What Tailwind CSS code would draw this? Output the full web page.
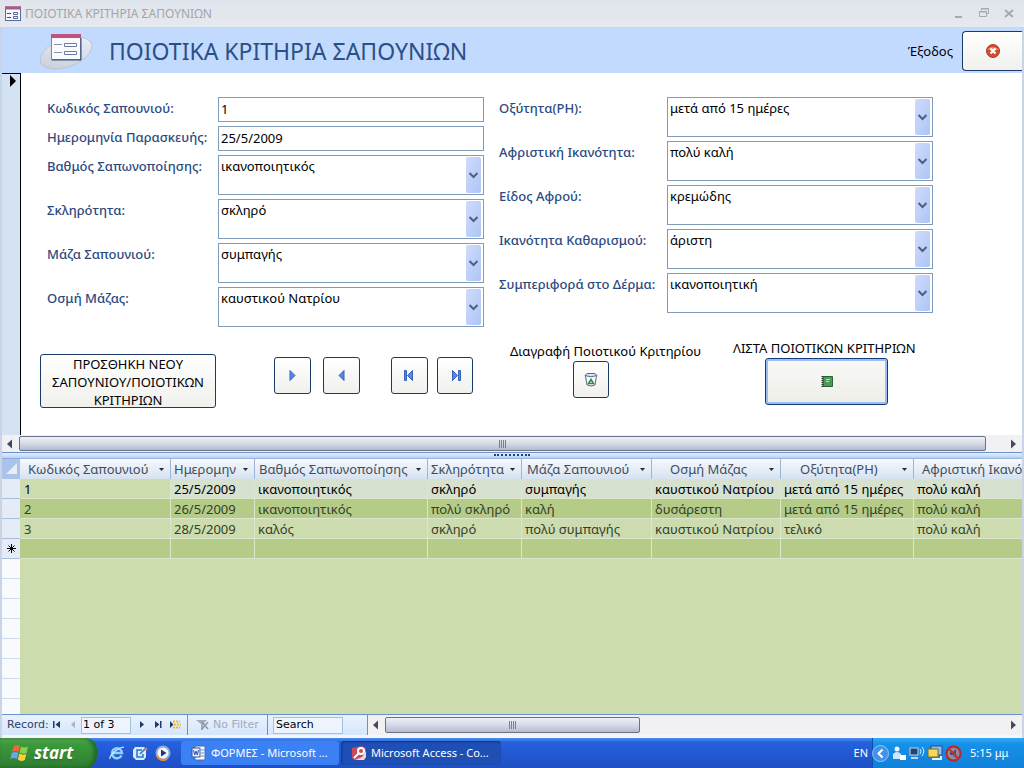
<!doctype html>
<html lang="el">

<head>
  <meta charset="UTF-8" />
  <meta name="viewport" content="width=device-width, initial-scale=1.0" />
  <title>Ποιοτικά Κριτήρια Σαπουνιών</title>
  <script src="https://cdn.jsdelivr.net/npm/@tailwindcss/browser@4"></script>
</head>

<body class="min-h-screen flex flex-col overflow-x-hidden bg-[#c9d5e6] font-['Noto_Sans',sans-serif] text-[13px] leading-[18px] text-black">

  <!-- Title bar -->
  <div class="flex items-center h-7 pl-[5px] pr-2 bg-linear-to-b from-[#dfe4ec] to-[#e6e9ee] border-b border-[#cbd6e6]">
    <svg class="w-4 h-4 shrink-0" viewBox="0 0 16 16" fill="none">
      <rect x=".5" y="1" width="15" height="13.5" fill="#f8faff" stroke="#5a6da0" />
      <path d="M0 2h16" stroke="#b0577c" stroke-width="3" />
      <path d="M2 7.500h4M2 11.500h4" stroke="#444c66" />
      <path d="M8.500 6.500h4v2h-4zM8.500 10.500h4v2h-4z" fill="#fff" stroke="#52658f" />
    </svg>
    <h2 class="ml-1 text-[12px] text-[#a3a5ab]">ΠΟΙΟΤΙΚΑ ΚΡΙΤΗΡΙΑ ΣΑΠΟΥΝΙΩΝ</h2>
    <div class="ml-auto flex gap-[13px]">
      <button type="button" aria-label="Minimize"><svg class="w-3 h-3" viewBox="0 0 12 12"><path d="M1 9h7" stroke="#a5abb5" stroke-width="2" /></svg></button>
      <button type="button" aria-label="Restore"><svg class="w-3 h-3" viewBox="0 0 12 12" fill="none" stroke="#a5abb5"><path d="M2.500 2.500v-2h7v5h-2M2 1h8" /><path d="M.5 3.500h7v5h-7zM0 4h8" /></svg></button>
      <button type="button" aria-label="Close"><svg class="w-3 h-3" viewBox="0 0 12 12" fill="none" stroke="#a5abb5" stroke-width="2"><path d="M1 2l8 7M9 2l-8 7" /></svg></button>
    </div>
  </div>

  <div class="flex flex-col flex-1 mx-[2px] min-w-0">

    <!-- Form header -->
    <header class="flex items-center h-[45px] pl-9 bg-[#c1dafe]">
      <svg class="w-14 h-10 shrink-0" viewBox="0 0 56 40">
        <defs>
          <linearGradient id="oval" x1="0" y1="1" x2="1" y2="0">
            <stop offset="0" stop-color="#c5cad3" />
            <stop offset="1" stop-color="#edf3fc" />
          </linearGradient>
        </defs>
        <ellipse cx="28" cy="22" rx="27" ry="14" transform="rotate(-20 28 22)" fill="url(#oval)" stroke="#b3bccb" stroke-width=".7" />
        <rect x="13.500" y="4.500" width="29" height="24" fill="#f8fafd" stroke="#7987a6" />
        <path d="M13 5h30" stroke="#c0527c" stroke-width="4" />
        <path d="M16 13.500h8M16 21.500h8" stroke="#8793a8" />
        <path d="M26.500 12.500h12v3h-12zM26.500 20.500h12v3h-12z" fill="#fff" stroke="#687d9f" />
        <path d="M43 7v22H14" fill="none" stroke="#34466e" />
      </svg>
      <h1 class="ml-[15px] text-[23px] leading-8 text-[#2b4f86]">ΠΟΙΟΤΙΚΑ ΚΡΙΤΗΡΙΑ ΣΑΠΟΥΝΙΩΝ</h1>
      <label for="exit" class="ml-auto mr-[9px]">Έξοδος</label>
      <button id="exit" type="button" class="flex items-center justify-center w-[60px] h-10 rounded-l-sm border border-r-0 border-[#1b3a67] bg-linear-to-b from-white to-[#f0f0ec]">
        <svg class="w-4 h-4" viewBox="0 0 16 16">
          <circle cx="8" cy="8" r="6.500" fill="#d9482b" stroke="#a8402c" />
          <path d="M2.500 7a6 5 0 0 1 11 0z" fill="#ee8668" />
          <path d="M5.500 5.500l5 5M10.500 5.500l-5 5" stroke="#fff" stroke-width="2.400" />
        </svg>
      </button>
    </header>

    <!-- Form detail -->
    <div class="flex h-[362px] bg-white">
      <div class="w-[19px] shrink-0 border-t border-r border-black bg-[#d4e3f3]">
        <svg class="w-[18px] h-4" viewBox="0 0 18 16"><path d="M8 1v12l6-6z" fill="#000" /></svg>
      </div>

      <div class="flex-1 min-w-0">
        <form class="flex items-start pt-6 pl-[26px] gap-[15px] text-[#2b4a80]">
          <div class="grid grid-cols-[171px_266px] gap-y-1 items-start">
            <label for="code" class="pt-[2px] font-medium whitespace-nowrap">Κωδικός Σαπουνιού:</label>
            <input id="code" value="1" class="h-[25px] px-[2px] pb-[2px] border border-[#7f9db9] text-black" />

            <label for="date" class="pt-[2px] font-medium whitespace-nowrap">Ημερομηνία Παρασκευής:</label>
            <input id="date" value="25/5/2009" class="h-[25px] px-[2px] pb-[2px] border border-[#7f9db9] text-black" />

            <label for="grade" class="pt-[2px] font-medium whitespace-nowrap">Βαθμός Σαπωνοποίησης:</label>
            <div class="relative">
              <select id="grade" class="block appearance-none w-full h-10 px-[2px] pb-[18px] border border-[#7f9db9] bg-white text-black"><option>ικανοποιητικός</option></select>
              <span class="absolute right-[3px] top-[2px] bottom-[2px] flex items-center pointer-events-none w-[15px] rounded-xs bg-linear-to-br from-[#cfdcfb] to-[#afc5f7]"><svg class="w-[15px] h-3" viewBox="0 0 15 12" fill="none"><path d="M3.500 4l4 4 4-4" stroke="#4d6185" stroke-width="2" /></svg></span>
            </div>

            <label for="hardness" class="pt-[2px] font-medium whitespace-nowrap">Σκληρότητα:</label>
            <div class="relative">
              <select id="hardness" class="block appearance-none w-full h-10 px-[2px] pb-[18px] border border-[#7f9db9] bg-white text-black"><option>σκληρό</option></select>
              <span class="absolute right-[3px] top-[2px] bottom-[2px] flex items-center pointer-events-none w-[15px] rounded-xs bg-linear-to-br from-[#cfdcfb] to-[#afc5f7]"><svg class="w-[15px] h-3" viewBox="0 0 15 12" fill="none"><path d="M3.500 4l4 4 4-4" stroke="#4d6185" stroke-width="2" /></svg></span>
            </div>

            <label for="mass" class="pt-[2px] font-medium whitespace-nowrap">Μάζα Σαπουνιού:</label>
            <div class="relative">
              <select id="mass" class="block appearance-none w-full h-10 px-[2px] pb-[18px] border border-[#7f9db9] bg-white text-black"><option>συμπαγής</option></select>
              <span class="absolute right-[3px] top-[2px] bottom-[2px] flex items-center pointer-events-none w-[15px] rounded-xs bg-linear-to-br from-[#cfdcfb] to-[#afc5f7]"><svg class="w-[15px] h-3" viewBox="0 0 15 12" fill="none"><path d="M3.500 4l4 4 4-4" stroke="#4d6185" stroke-width="2" /></svg></span>
            </div>

            <label for="smell" class="pt-[2px] font-medium whitespace-nowrap">Οσμή Μάζας:</label>
            <div class="relative">
              <select id="smell" class="block appearance-none w-full h-10 px-[2px] pb-[18px] border border-[#7f9db9] bg-white text-black"><option>καυστικού Νατρίου</option></select>
              <span class="absolute right-[3px] top-[2px] bottom-[2px] flex items-center pointer-events-none w-[15px] rounded-xs bg-linear-to-br from-[#cfdcfb] to-[#afc5f7]"><svg class="w-[15px] h-3" viewBox="0 0 15 12" fill="none"><path d="M3.500 4l4 4 4-4" stroke="#4d6185" stroke-width="2" /></svg></span>
            </div>
          </div>

          <div class="grid grid-cols-[168px_266px] gap-y-1 items-start">
            <label for="ph" class="pt-[2px] font-medium whitespace-nowrap">Οξύτητα(PH):</label>
            <div class="relative">
              <select id="ph" class="block appearance-none w-full h-10 px-[2px] pb-[18px] border border-[#7f9db9] bg-white text-black"><option>μετά από 15 ημέρες</option></select>
              <span class="absolute right-[3px] top-[2px] bottom-[2px] flex items-center pointer-events-none w-[15px] rounded-xs bg-linear-to-br from-[#cfdcfb] to-[#afc5f7]"><svg class="w-[15px] h-3" viewBox="0 0 15 12" fill="none"><path d="M3.500 4l4 4 4-4" stroke="#4d6185" stroke-width="2" /></svg></span>
            </div>

            <label for="foaming" class="pt-[2px] font-medium whitespace-nowrap">Αφριστική Ικανότητα:</label>
            <div class="relative">
              <select id="foaming" class="block appearance-none w-full h-10 px-[2px] pb-[18px] border border-[#7f9db9] bg-white text-black"><option>πολύ καλή</option></select>
              <span class="absolute right-[3px] top-[2px] bottom-[2px] flex items-center pointer-events-none w-[15px] rounded-xs bg-linear-to-br from-[#cfdcfb] to-[#afc5f7]"><svg class="w-[15px] h-3" viewBox="0 0 15 12" fill="none"><path d="M3.500 4l4 4 4-4" stroke="#4d6185" stroke-width="2" /></svg></span>
            </div>

            <label for="foam" class="pt-[2px] font-medium whitespace-nowrap">Είδος Αφρού:</label>
            <div class="relative">
              <select id="foam" class="block appearance-none w-full h-10 px-[2px] pb-[18px] border border-[#7f9db9] bg-white text-black"><option>κρεμώδης</option></select>
              <span class="absolute right-[3px] top-[2px] bottom-[2px] flex items-center pointer-events-none w-[15px] rounded-xs bg-linear-to-br from-[#cfdcfb] to-[#afc5f7]"><svg class="w-[15px] h-3" viewBox="0 0 15 12" fill="none"><path d="M3.500 4l4 4 4-4" stroke="#4d6185" stroke-width="2" /></svg></span>
            </div>

            <label for="cleaning" class="pt-[2px] font-medium whitespace-nowrap">Ικανότητα Καθαρισμού:</label>
            <div class="relative">
              <select id="cleaning" class="block appearance-none w-full h-10 px-[2px] pb-[18px] border border-[#7f9db9] bg-white text-black"><option>άριστη</option></select>
              <span class="absolute right-[3px] top-[2px] bottom-[2px] flex items-center pointer-events-none w-[15px] rounded-xs bg-linear-to-br from-[#cfdcfb] to-[#afc5f7]"><svg class="w-[15px] h-3" viewBox="0 0 15 12" fill="none"><path d="M3.500 4l4 4 4-4" stroke="#4d6185" stroke-width="2" /></svg></span>
            </div>

            <label for="skin" class="pt-[2px] font-medium whitespace-nowrap">Συμπεριφορά στο Δέρμα:</label>
            <div class="relative">
              <select id="skin" class="block appearance-none w-full h-10 px-[2px] pb-[18px] border border-[#7f9db9] bg-white text-black"><option>ικανοποιητική</option></select>
              <span class="absolute right-[3px] top-[2px] bottom-[2px] flex items-center pointer-events-none w-[15px] rounded-xs bg-linear-to-br from-[#cfdcfb] to-[#afc5f7]"><svg class="w-[15px] h-3" viewBox="0 0 15 12" fill="none"><path d="M3.500 4l4 4 4-4" stroke="#4d6185" stroke-width="2" /></svg></span>
            </div>
          </div>
        </form>

        <!-- Form actions -->
        <div class="flex items-start mt-3 pl-[19px]">
          <button type="button" class="mt-[15px] w-44 h-[54px] overflow-hidden rounded-[3px] border border-[#1b3a67] bg-linear-to-b from-white to-[#f0f0ec]">ΠΡΟΣΘΗΚΗ ΝΕΟΥ ΣΑΠΟΥΝΙΟΥ/ΠΟΙΟΤΙΚΩΝ ΚΡΙΤΗΡΙΩΝ</button>

          <div class="flex mt-[18px] ml-[58px] gap-3">
            <button type="button" aria-label="Επόμενη" class="flex items-center justify-center w-[37px] h-[37px] rounded-[3px] border border-[#1b3a67] bg-linear-to-b from-white to-[#f0f0ec]">
              <svg class="w-4 h-4" viewBox="0 0 16 16"><path d="M5 2.500v10l5-5z" fill="#5b86e5" stroke="#3560bd" /></svg>
            </button>
            <button type="button" aria-label="Προηγούμενη" class="flex items-center justify-center w-[37px] h-[37px] rounded-[3px] border border-[#1b3a67] bg-linear-to-b from-white to-[#f0f0ec]">
              <svg class="w-4 h-4" viewBox="0 0 16 16"><path d="M10 2.500v10l-5-5z" fill="#5b86e5" stroke="#3560bd" /></svg>
            </button>
          </div>
          <div class="flex mt-[18px] ml-[31px] gap-[9px]">
            <button type="button" aria-label="Πρώτη" class="flex items-center justify-center w-[37px] h-[37px] rounded-[3px] border border-[#1b3a67] bg-linear-to-b from-white to-[#f0f0ec]">
              <svg class="w-4 h-4" viewBox="0 0 16 16" fill="#5b86e5" stroke="#3560bd"><path d="M2.500 2.500h2v10h-2zM10.500 2.500v10l-5-5z" /></svg>
            </button>
            <button type="button" aria-label="Τελευταία" class="flex items-center justify-center w-9 h-[37px] rounded-[3px] border border-[#1b3a67] bg-linear-to-b from-white to-[#f0f0ec]">
              <svg class="w-4 h-4" viewBox="0 0 16 16" fill="#5b86e5" stroke="#3560bd"><path d="M11.500 2.500h2v10h-2zM5.500 2.500v10l5-5z" /></svg>
            </button>
          </div>

          <div class="mt-[3px] ml-[37px] w-[193px]">
            <label for="delete" class="block pb-px whitespace-nowrap">Διαγραφή Ποιοτικού Κριτηρίου</label>
            <button id="delete" type="button" class="flex items-center justify-center ml-[63px] w-9 h-[37px] rounded-[3px] border border-[#1b3a67] bg-linear-to-b from-white to-[#f0f0ec]">
              <svg class="w-4 h-4" viewBox="0 0 16 16" fill="none">
                <path d="M2.500 4l1.500 9q4 2 8 0L13.500 4" fill="#f5f7fa" stroke="#5a6a85" />
                <path d="M2 3.500l2-2h8l2 2q-6 2.500-12 0z" fill="#dfe5ee" stroke="#5a6a85" />
                <path d="M8 7.500l2.500 4h-5z" stroke="#2f8a45" stroke-width="1.500" />
              </svg>
            </button>
          </div>

          <div class="ml-[30px]">
            <label for="list" class="block pb-px whitespace-nowrap">ΛΙΣΤΑ ΠΟΙΟΤΙΚΩΝ ΚΡΙΤΗΡΙΩΝ</label>
            <button id="list" type="button" class="flex items-center justify-center ml-8 w-[123px] h-[47px] rounded-[3px] border border-[#123a7c] bg-linear-to-b from-[#f8f8f5] to-[#eeeee9] inset-ring-2 inset-ring-[#9fbdf0]">
              <svg class="w-3 h-3" viewBox="0 0 12 12">
                <path d="M2 .5h9.500v10H2z" fill="#4c9a56" stroke="#2c6236" />
                <path d="M5 3.500h4M5 5.500h3" stroke="#b9e2b6" />
                <path d="M1.500 0v11" stroke="#333" stroke-width="2" stroke-dasharray="1 1" />
              </svg>
            </button>
          </div>
        </div>
      </div>
    </div>

    <!-- Form scrollbar -->
    <div class="flex items-stretch h-[17px] bg-[#f1f1f3]">
      <button type="button" aria-label="Αριστερά" class="w-[17px] shrink-0"><svg class="w-4 h-4" viewBox="0 0 16 16"><path d="M10 3.500v9L5 8z" fill="#3e4a60" /></svg></button>
      <div class="flex-1 flex items-center justify-center my-px rounded-xs border border-[#6a7287] bg-linear-to-b from-[#eef1f7] via-[#d5dae6] to-[#b4bbcc]">
        <svg class="w-2 h-2" viewBox="0 0 8 8"><path d="M.5 0v8M2.500 0v8M4.500 0v8M6.500 0v8" stroke="#767f92" /></svg>
      </div>
      <button type="button" aria-label="Δεξιά" class="w-9 shrink-0 flex items-center justify-end pr-px"><svg class="w-4 h-4" viewBox="0 0 16 16"><path d="M6 3.500v9L11 8z" fill="#3e4a60" /></svg></button>
    </div>

    <!-- Splitter -->
    <div class="flex items-start justify-center h-[6px] pt-px border-t border-[#6b92cd] bg-linear-to-b from-[#e6f0ff] to-[#b4d0fa]">
      <span class="w-9 border-t-2 border-dotted border-[#263f72]"></span>
    </div>

    <!-- Datasheet -->
    <div class="flex flex-col flex-1 overflow-hidden bg-[#cddcaf]">
      <table class="table-fixed w-full border-separate border-spacing-0 text-left whitespace-nowrap">
        <colgroup>
          <col class="w-[18px]" />
          <col class="w-[151px]" />
          <col class="w-[84px]" />
          <col class="w-[173px]" />
          <col class="w-[94px]" />
          <col class="w-[130px]" />
          <col class="w-[129px]" />
          <col class="w-[133px]" />
          <col />
        </colgroup>
        <thead>
          <tr class="h-[21px] bg-linear-to-b from-[#f7fafe] to-[#d7e2f0] text-[#414d5c]">
            <th scope="col" aria-label="Επιλογή" class="p-0 bg-[#a9c3e9] border-t border-[#8dabda]"><svg class="w-[18px] h-5" viewBox="0 0 18 20"><path d="M15 4v11H4z" fill="#e7eef8" /></svg></th>
            <th scope="col" class="p-0 font-normal border-t border-r border-[#9db5d6]"><div class="flex items-center justify-between pl-2 pr-[6px]">Κωδικός Σαπουνιού<svg class="w-[5px] h-[3px]" viewBox="0 0 5 3"><path d="M0 0h5L2.500 3z" fill="#222b3a" /></svg></div></th>
            <th scope="col" class="p-0 font-normal border-t border-r border-[#9db5d6]"><div class="flex items-center justify-between pl-[3px] pr-[6px]">Ημερομην<svg class="w-[5px] h-[3px]" viewBox="0 0 5 3"><path d="M0 0h5L2.500 3z" fill="#222b3a" /></svg></div></th>
            <th scope="col" class="p-0 font-normal border-t border-r border-[#9db5d6]"><div class="flex items-center justify-between pl-1 pr-[6px]">Βαθμός Σαπωνοποίησης<svg class="w-[5px] h-[3px]" viewBox="0 0 5 3"><path d="M0 0h5L2.500 3z" fill="#222b3a" /></svg></div></th>
            <th scope="col" class="p-0 font-normal border-t border-r border-[#9db5d6]"><div class="flex items-center justify-between pl-[3px] pr-[6px]">Σκληρότητα<svg class="w-[5px] h-[3px]" viewBox="0 0 5 3"><path d="M0 0h5L2.500 3z" fill="#222b3a" /></svg></div></th>
            <th scope="col" class="p-0 font-normal border-t border-r border-[#9db5d6]"><div class="flex items-center justify-between pl-[5px] pr-[6px]">Μάζα Σαπουνιού<svg class="w-[5px] h-[3px]" viewBox="0 0 5 3"><path d="M0 0h5L2.500 3z" fill="#222b3a" /></svg></div></th>
            <th scope="col" class="p-0 font-normal border-t border-r border-[#9db5d6]"><div class="flex items-center justify-between pl-[18px] pr-[6px]">Οσμή Μάζας<svg class="w-[5px] h-[3px]" viewBox="0 0 5 3"><path d="M0 0h5L2.500 3z" fill="#222b3a" /></svg></div></th>
            <th scope="col" class="p-0 font-normal border-t border-r border-[#9db5d6]"><div class="flex items-center justify-between pl-[19px] pr-[6px]">Οξύτητα(PH)<svg class="w-[5px] h-[3px]" viewBox="0 0 5 3"><path d="M0 0h5L2.500 3z" fill="#222b3a" /></svg></div></th>
            <th scope="col" class="p-0 pl-2 font-normal overflow-hidden border-t border-[#9db5d6]">Αφριστική Ικανότητα</th>
          </tr>
        </thead>
        <tbody class="text-[#33402a]">
          <tr class="h-5 bg-[#d7e1cf] text-black">
            <td class="p-0 bg-[#e4ecf7] border-b border-[#a9bedb]"></td>
            <td class="p-0 pl-1 bg-[#cddcaf] border-r border-b border-[#dbe6cc]">1</td>
            <td class="p-0 pl-[3px] border-r border-b border-[#dbe6cc]">25/5/2009</td>
            <td class="p-0 pl-[3px] border-r border-b border-[#dbe6cc]">ικανοποιητικός</td>
            <td class="p-0 pl-[3px] border-r border-b border-[#dbe6cc]">σκληρό</td>
            <td class="p-0 pl-[3px] border-r border-b border-[#dbe6cc]">συμπαγής</td>
            <td class="p-0 pl-[3px] border-r border-b border-[#dbe6cc]">καυστικού Νατρίου</td>
            <td class="p-0 pl-[3px] border-r border-b border-[#dbe6cc]">μετά από 15 ημέρες</td>
            <td class="p-0 pl-[3px] border-b border-[#dbe6cc]">πολύ καλή</td>
          </tr>
          <tr class="h-5 bg-[#b5cc88]">
            <td class="p-0 bg-[#e4ecf7] border-b border-[#a9bedb]"></td>
            <td class="p-0 pl-1 border-r border-b border-[#dbe6cc]">2</td>
            <td class="p-0 pl-[3px] border-r border-b border-[#dbe6cc]">26/5/2009</td>
            <td class="p-0 pl-[3px] border-r border-b border-[#dbe6cc]">ικανοποιητικός</td>
            <td class="p-0 pl-[3px] border-r border-b border-[#dbe6cc]">πολύ σκληρό</td>
            <td class="p-0 pl-[3px] border-r border-b border-[#dbe6cc]">καλή</td>
            <td class="p-0 pl-[3px] border-r border-b border-[#dbe6cc]">δυσάρεστη</td>
            <td class="p-0 pl-[3px] border-r border-b border-[#dbe6cc]">μετά από 15 ημέρες</td>
            <td class="p-0 pl-[3px] border-b border-[#dbe6cc]">πολύ καλή</td>
          </tr>
          <tr class="h-5 bg-[#cddcaf]">
            <td class="p-0 bg-[#e4ecf7] border-b border-[#a9bedb]"></td>
            <td class="p-0 pl-1 border-r border-b border-[#dbe6cc]">3</td>
            <td class="p-0 pl-[3px] border-r border-b border-[#dbe6cc]">28/5/2009</td>
            <td class="p-0 pl-[3px] border-r border-b border-[#dbe6cc]">καλός</td>
            <td class="p-0 pl-[3px] border-r border-b border-[#dbe6cc]">σκληρό</td>
            <td class="p-0 pl-[3px] border-r border-b border-[#dbe6cc]">πολύ συμπαγής</td>
            <td class="p-0 pl-[3px] border-r border-b border-[#dbe6cc]">καυστικού Νατρίου</td>
            <td class="p-0 pl-[3px] border-r border-b border-[#dbe6cc]">τελικό</td>
            <td class="p-0 pl-[3px] border-b border-[#dbe6cc]">πολύ καλή</td>
          </tr>
          <tr class="h-5 bg-[#b5cc88]">
            <td class="p-0 bg-[#e4ecf7] border-b border-[#a9bedb]">
              <svg class="w-[18px] h-3" viewBox="0 0 18 12"><path d="M9.500 1v9M5 5.500h9M6.500 2.500l6 6M12.500 2.500l-6 6" stroke="#000" /></svg>
            </td>
            <td class="p-0 border-r border-b border-[#dbe6cc]"></td>
            <td class="p-0 border-r border-b border-[#dbe6cc]"></td>
            <td class="p-0 border-r border-b border-[#dbe6cc]"></td>
            <td class="p-0 border-r border-b border-[#dbe6cc]"></td>
            <td class="p-0 border-r border-b border-[#dbe6cc]"></td>
            <td class="p-0 border-r border-b border-[#dbe6cc]"></td>
            <td class="p-0 border-r border-b border-[#dbe6cc]"></td>
            <td class="p-0 border-b border-[#dbe6cc]"></td>
          </tr>
        </tbody>
      </table>
      <!-- Empty row selectors -->
      <div class="flex-1 w-[18px] bg-[#f8fafd] bg-[repeating-linear-gradient(to_bottom,transparent_0_19px,#cfdbea_19px_20px)]"></div>
    </div>

    <!-- Record navigation -->
    <div class="flex h-[21px] border-t border-[#6b92cd] bg-[#f1f1f3] font-['DejaVu_Sans',sans-serif] text-[11px] leading-4">
      <div class="flex items-center w-[366px] bg-linear-to-b from-[#e9f2ff] to-[#d6e6fb] text-[#2b3f66]">
        <label for="record" class="w-[45px] pl-[5px]">Record:</label>
        <button type="button" aria-label="First record" class="ml-[2px]"><svg class="w-4 h-3" viewBox="0 0 16 12"><path d="M4 2h1.500v7H4zM11 2v7L6.500 5.500z" fill="#1e3a6e" /></svg></button>
        <button type="button" aria-label="Previous record"><svg class="w-4 h-3" viewBox="0 0 16 12"><path d="M10 2v7L6 5.500z" fill="#a9b4c6" /></svg></button>
        <input id="record" value="1 of 3" class="w-[50px] h-[17px] pl-px pb-px border border-[#a9c0dd] bg-[#edf4fe] text-black" />
        <button type="button" aria-label="Next record" class="ml-[3px]"><svg class="w-4 h-3" viewBox="0 0 16 12"><path d="M6 2v7l4-3.500z" fill="#1e3a6e" /></svg></button>
        <button type="button" aria-label="Last record"><svg class="w-4 h-3" viewBox="0 0 16 12"><path d="M10 2h1.500v7H10zM5 2v7l4.500-3.500z" fill="#1e3a6e" /></svg></button>
        <button type="button" aria-label="New record"><svg class="w-4 h-3" viewBox="0 0 16 12"><path d="M4 2v7l3.500-3.500z" fill="#1e3a6e" /><path d="M7 2.500h7M8 5.500h7M7 8.500h7" stroke="#efb82e" stroke-width="2" stroke-dasharray="2 1" /></svg></button>
        <button type="button" disabled class="flex items-center ml-[5px] pl-2 w-20 h-full border-l border-[#6b92cd] text-[#a3abb8] whitespace-nowrap">
          <svg class="w-4 h-3 mr-px shrink-0" viewBox="0 0 16 12"><path d="M0 1h11L7 5v6H5V5z" fill="#a3abb8" /><path d="M6 3l6 7M12 3l-6 7" stroke="#8d96a5" stroke-width="1.500" /></svg>
          No Filter
        </button>
        <div class="flex items-center flex-1 h-full pl-[5px] border-l border-r border-[#6b92cd]">
          <input aria-label="Search" value="Search" class="w-[70px] h-[17px] pl-[2px] pb-px border border-[#a9c0dd] bg-[#edf4fe] text-black" />
        </div>
      </div>
      <div class="flex flex-1">
        <button type="button" aria-label="Left" class="shrink-0 w-[17px]"><svg class="w-4 h-4" viewBox="0 0 16 16"><path d="M10 3.500v9L5 8z" fill="#3e4a60" /></svg></button>
        <div class="flex items-center justify-center my-[2px] w-[255px] rounded-xs border border-[#6a7287] bg-linear-to-b from-[#eef1f7] via-[#d5dae6] to-[#b4bbcc]">
          <svg class="w-2 h-2" viewBox="0 0 8 8"><path d="M.5 0v8M2.500 0v8M4.500 0v8M6.500 0v8" stroke="#767f92" /></svg>
        </div>
        <button type="button" aria-label="Right" class="ml-auto"><svg class="w-4 h-4" viewBox="0 0 16 16"><path d="M5 3.500v9L10 8z" fill="#3e4a60" /></svg></button>
      </div>
    </div>
    <div class="h-[3px] bg-[#f4f6fa]"></div>
  </div>

  <!-- Taskbar -->
  <footer class="flex h-[30px] bg-linear-to-b from-[#4c8df2] via-[#2560dd] via-15% to-[#1f4fc4] text-[11px] leading-4 text-white">
    <button type="button" class="flex items-center gap-1 w-[97px] pl-[10px] rounded-r-xl bg-linear-to-b from-[#5cae55] via-[#3b9a3b] via-20% to-[#2f7d30] shadow-[inset_-3px_0_4px_#1e6423] text-[17px] leading-5 font-bold italic text-shadow-sm font-['Open_Sans',sans-serif]">
      <svg class="w-5 h-5 shrink-0" viewBox="0 0 20 20">
        <path d="M4 3q3-2 6 0L8.500 9q-3-2-6.500 0z" fill="#f0663a" />
        <path d="M11 3.500q3 2 7 0L16.500 10q-4 1.500-7-.5z" fill="#8ad04b" />
        <path d="M1.800 10q3-2 6.500 0L6.800 16q-3-2-6.500 0z" fill="#6ba4f5" />
        <path d="M9.300 10.500q3 2 7 .5L14.800 17q-4 2-7-.5z" fill="#f8cf3c" />
      </svg>
      start
    </button>

    <div class="flex items-center gap-[7px] ml-3">
      <a href="#" aria-label="Internet Explorer"><svg class="w-4 h-4" viewBox="0 0 16 16" fill="none"><path d="M12.500 10.500A5 5 0 1 1 13 8H4" stroke="#8fd0ff" stroke-width="2.500" /><path d="M1 14C0 11 8 3 15 2" stroke="#c9e9ff" stroke-width="1.200" /></svg></a>
      <a href="#" aria-label="Outlook Express"><svg class="w-4 h-4" viewBox="0 0 16 16"><path d="M3 2h9l2 2v8l-2 3H4l-3-3V5z" fill="#d9ecfa" /><path d="M10 5H5v7h6V9M8 9l6-6" fill="none" stroke="#2878c4" stroke-width="1.500" /><circle cx="14" cy="4" r="1.500" fill="#e27b4c" /></svg></a>
      <a href="#" aria-label="Media Player"><svg class="w-4 h-4" viewBox="0 0 16 16"><circle cx="8" cy="8" r="6.500" fill="#f1f5fc" stroke="#8fa9d8" stroke-width="2" /><path d="M2 11a7 7 0 0 0 10 3" fill="none" stroke="#ef8b2d" stroke-width="2" /><path d="M6 4.500v7L11.500 8z" fill="#20386f" /></svg></a>
    </div>

    <div class="flex items-center gap-[2px] ml-[10px]">
      <button type="button" class="flex items-center gap-1 w-[158px] h-6 pl-[10px] rounded-[3px] bg-[#3c81f3] whitespace-nowrap">
        <svg class="w-4 h-4 shrink-0" viewBox="0 0 16 16"><path d="M4 1h10v14H4z" fill="#fff" stroke="#4767ab" /><path d="M10 5h3M10 8h3M10 11h3" stroke="#6582bf" /><rect x="1" y="3" width="8" height="9" fill="#e8effd" stroke="#2f55a8" /><path d="M2.500 5l1.200 5L5 6l1.300 4L7.500 5" fill="none" stroke="#2f55a8" /></svg>
        ΦΟΡΜΕΣ - Microsoft ...
      </button>
      <button type="button" class="flex items-center gap-1 w-[160px] h-6 pl-[10px] rounded-[3px] bg-[#1e4fb4] shadow-[inset_1px_1px_2px_#123780] whitespace-nowrap">
        <svg class="w-4 h-4 shrink-0" viewBox="0 0 16 16"><path d="M1 3l10-2 4 2v9l-2 3H3l-2-2z" fill="#c94a5e" /><path d="M4 15h9l2-3V6l-4 6z" fill="#f3d6da" /><circle cx="10" cy="6" r="3" fill="none" stroke="#fff" stroke-width="2" /><path d="M8 8l-5 5" stroke="#fff" stroke-width="2" /></svg>
        Microsoft Access - Co...
      </button>
    </div>

    <span class="ml-auto mr-1 self-center">EN</span>
    <div class="flex items-center gap-[2px] w-[152px] bg-linear-to-b from-[#35a9f5] via-[#1591ea] via-20% to-[#1180d8] border-l border-[#0d4fb0]">
      <button type="button" aria-label="Show hidden icons" class="shrink-0 -ml-px"><svg class="w-[17px] h-[17px]" viewBox="0 0 17 17"><circle cx="8.500" cy="8.500" r="8" fill="#3f93ee" stroke="#8cc6fa" /><path d="M10.500 4.500l-4 4 4 4" fill="none" stroke="#fff" stroke-width="2" /></svg></button>
      <svg class="w-4 h-4 shrink-0" viewBox="0 0 16 16"><circle cx="6" cy="4" r="2.500" fill="#e8f4ff" /><path d="M2 14V9q4-4 8 0v5z" fill="#cfe5fa" /><rect x="9" y="10" width="6" height="5" fill="#fff" /></svg>
      <svg class="w-4 h-4 shrink-0" viewBox="0 0 16 16" fill="none"><rect x="1" y="3" width="8" height="7" fill="#204477" stroke="#c5d5e8" /><path d="M2 13h7" stroke="#c5d5e8" stroke-width="2" /><path d="M11 4q2 2.500 0 5M13 2q3.500 4 0 9" stroke="#d9ecff" /></svg>
      <svg class="w-4 h-4 shrink-0" viewBox="0 0 16 16"><rect x="4" y="1" width="11" height="9" fill="#8dbaf0" stroke="#2c4d86" /><rect x="1" y="4" width="10" height="8" fill="#f6d85a" stroke="#806b22" /><path d="M5 14h9v-3" fill="none" stroke="#e4effb" stroke-width="2" /></svg>
      <svg class="w-[17px] h-[17px] shrink-0" viewBox="0 0 17 17" fill="none"><circle cx="8.500" cy="8.500" r="7" fill="#8c8f98" stroke="#bc2330" stroke-width="2" /><path d="M5 7h3l3-3v9L8 10H5z" fill="#4c4f58" /><path d="M3.500 3.500l10 10" stroke="#d32936" stroke-width="2" /></svg>
      <time class="ml-[6px] whitespace-nowrap">5:15 μμ</time>
    </div>
  </footer>
</body>

</html>
